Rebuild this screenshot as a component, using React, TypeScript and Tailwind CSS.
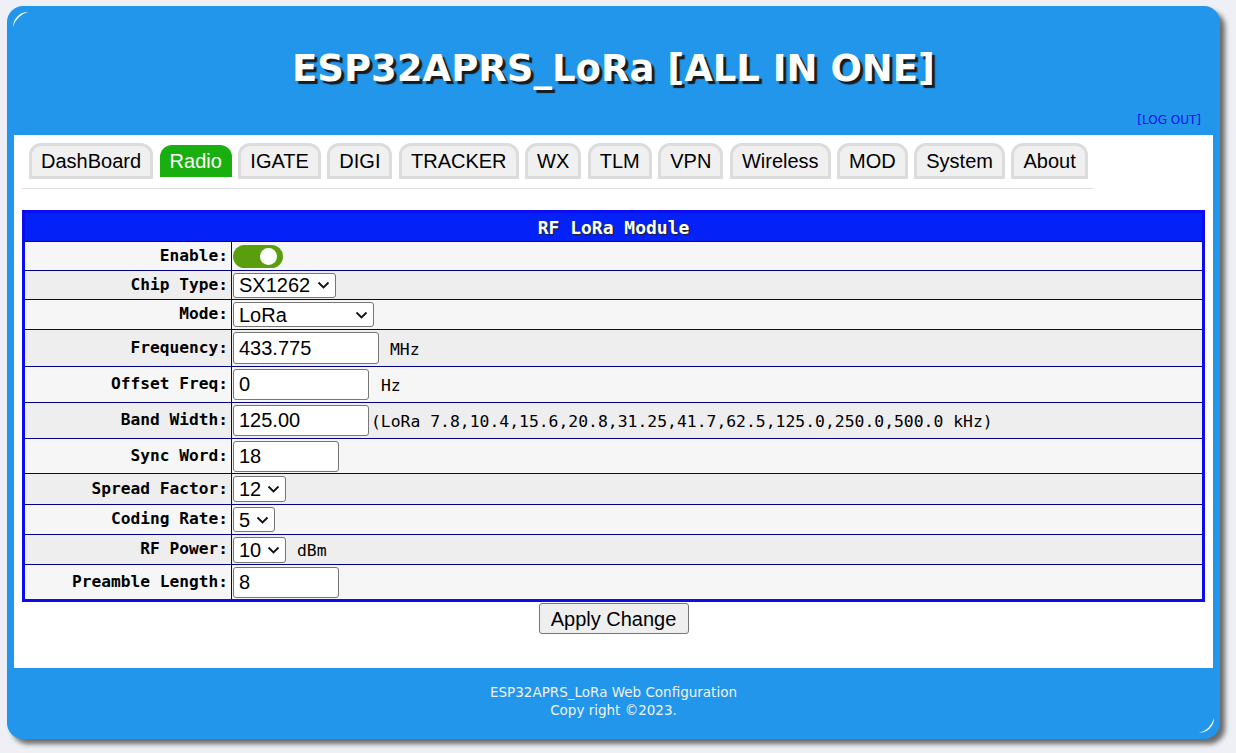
import React from "react";

const tabs = ["DashBoard", "Radio", "IGATE", "DIGI", "TRACKER", "WX", "TLM", "VPN", "Wireless", "MOD", "System", "About"];

function Chevron() {
  return (
    <svg width="13" height="8" viewBox="0 0 13 8" className="pointer-events-none absolute right-[6px] top-1/2 -translate-y-1/2">
      <path d="M1.5 1.5 L6.5 6.5 L11.5 1.5" fill="none" stroke="#111" strokeWidth="1.8" />
    </svg>
  );
}

function Select({ value, width, height = "h-[25px]" }: { value: string; width: string; height?: string }) {
  return (
    <div className={`relative ${width} ${height}`}>
      <select
        defaultValue={value}
        className="h-full w-full appearance-none rounded-[3px] border border-[#767676] bg-white pl-[5px] text-[20px] leading-none text-black"
      >
        <option value={value}>{value}</option>
      </select>
      <Chevron />
    </div>
  );
}

function TextInput({ value, width, height = "h-[32px]" }: { value: string; width: string; height?: string }) {
  return (
    <input
      defaultValue={value}
      className={`${width} ${height} rounded-[3px] border border-[#767676] bg-white pl-[5px] text-[20px] text-black outline-none`}
    />
  );
}

function Row({ label, h, dark, children }: { label: string; h: string; dark?: boolean; children: React.ReactNode }) {
  return (
    <div className={`flex ${h} border-t border-[#000080] ${dark ? "bg-[#eeeeee]" : "bg-[#f6f6f6]"}`}>
      <div className="flex w-[207px] items-center justify-end border-r border-[#000080] pr-[3px] font-['DejaVu_Sans_Mono',monospace] text-[16.2px] font-bold text-black">
        {label}
      </div>
      <div className="flex flex-1 items-center pl-[1px]">{children}</div>
    </div>
  );
}

function Unit({ children, ml }: { children: React.ReactNode; ml: string }) {
  return <span className={`${ml} mt-[4px] font-['DejaVu_Sans_Mono',monospace] text-[16.4px] text-black`}>{children}</span>;
}

function Corner({ className }: { className: string }) {
  return (
    <svg width="16" height="16" viewBox="0 0 16 16" className={`pointer-events-none absolute ${className}`}>
      <path d="M0 15 A15 15 0 0 1 15 0 A22 22 0 0 0 0 15 Z" fill="#ffffff" />
    </svg>
  );
}

export default function App() {
  return (
    <div className="min-h-[753px] bg-[#eef0f5] pl-[7px] pt-[6px] font-['Liberation_Sans',Arial,sans-serif]">
      <div className="relative w-[1213px] rounded-[16px] bg-[#2196eb] shadow-[5px_5px_5px_#6b6b6b]">
        <Corner className="left-[6px] top-[6px]" />
        <Corner className="bottom-[6px] right-[6px] rotate-180" />

        <header className="flex h-[129px] flex-col">
          <h1 className="pt-[41px] text-center font-['DejaVu_Sans',Verdana,sans-serif] text-[37px] font-bold leading-[44px] text-white [text-shadow:3px_3px_1px_#1a1a1a]">
            ESP32APRS_LoRa [ALL IN ONE]
          </h1>
          <div className="mt-[22px] pr-[19px] text-right font-['DejaVu_Sans',Verdana,sans-serif] text-[12px] leading-[14px]">
            <a className="text-[#1010e8]">[LOG OUT]</a>
          </div>
        </header>

        <main className="mx-[7px] h-[533px] bg-white">
          <nav className="ml-[8px] flex w-[1071px] items-start gap-[6.5px] border-b border-[#dddddd] pb-[9px] pl-[7px] pt-[8px]">
            {tabs.map((t) =>
              t === "Radio" ? (
                <div
                  key={t}
                  className="mt-[2px] flex h-[32px] items-center rounded-t-[12px] bg-[#19af0e] px-[10px] text-[20px] text-white"
                >
                  {t}
                </div>
              ) : (
                <div
                  key={t}
                  className="flex h-[36px] items-center rounded-t-[12px] border-[3px] border-[#dcdcdc] bg-[#f0f0f0] px-[9px] text-[20px] text-black"
                >
                  {t}
                </div>
              )
            )}
          </nav>

          <section className="mx-[8px] mt-[21px] border-[3px] border-[#0c0cf0]">
            <div className="flex h-[28px] items-center justify-center bg-[#0422f7] font-['DejaVu_Sans_Mono',monospace] text-[18px] font-bold text-white [text-shadow:1px_1px_1px_#222]">
              RF LoRa Module
            </div>
            <Row label="Enable:" h="h-[29px]">
              <div className="flex h-[23px] w-[50px] items-center justify-end rounded-full bg-[#5a9e10] pr-[6px]">
                <div className="h-[17px] w-[17px] rounded-full bg-white" />
              </div>
            </Row>
            <Row label="Chip Type:" h="h-[29px]" dark>
              <Select value="SX1262" width="w-[103px]" />
            </Row>
            <Row label="Mode:" h="h-[30px]">
              <Select value="LoRa" width="w-[141px]" />
            </Row>
            <Row label="Frequency:" h="h-[37px]" dark>
              <TextInput value="433.775" width="w-[146px]" />
              <Unit ml="ml-[11px]">MHz</Unit>
            </Row>
            <Row label="Offset Freq:" h="h-[36px]">
              <TextInput value="0" width="w-[136px]" height="h-[31px]" />
              <Unit ml="ml-[12px]">Hz</Unit>
            </Row>
            <Row label="Band Width:" h="h-[36px]" dark>
              <TextInput value="125.00" width="w-[136px]" height="h-[31px]" />
              <Unit ml="ml-[2px]">(LoRa 7.8,10.4,15.6,20.8,31.25,41.7,62.5,125.0,250.0,500.0 kHz)</Unit>
            </Row>
            <Row label="Sync Word:" h="h-[35px]">
              <TextInput value="18" width="w-[106px]" height="h-[31px]" />
            </Row>
            <Row label="Spread Factor:" h="h-[31px]" dark>
              <Select value="12" width="w-[53px]" height="h-[26px]" />
            </Row>
            <Row label="Coding Rate:" h="h-[30px]">
              <Select value="5" width="w-[42px]" />
            </Row>
            <Row label="RF Power:" h="h-[30px]" dark>
              <Select value="10" width="w-[53px]" height="h-[26px]" />
              <Unit ml="ml-[11px]">dBm</Unit>
            </Row>
            <Row label="Preamble Length:" h="h-[35px]">
              <TextInput value="8" width="w-[106px]" height="h-[31px]" />
            </Row>
          </section>

          <div className="mt-[1px] flex justify-center">
            <button className="h-[31px] w-[150px] rounded-[3px] border border-[#767676] bg-[#efefef] text-[20px] text-black">
              Apply Change
            </button>
          </div>
        </main>

        <footer className="h-[71px] pt-[15px] text-center font-['DejaVu_Sans',Verdana,sans-serif] text-[13.5px] leading-[18px] text-[#f2f2f2]">
          <div>ESP32APRS_LoRa Web Configuration</div>
          <div>Copy right ©2023.</div>
        </footer>
      </div>
    </div>
  );
}
